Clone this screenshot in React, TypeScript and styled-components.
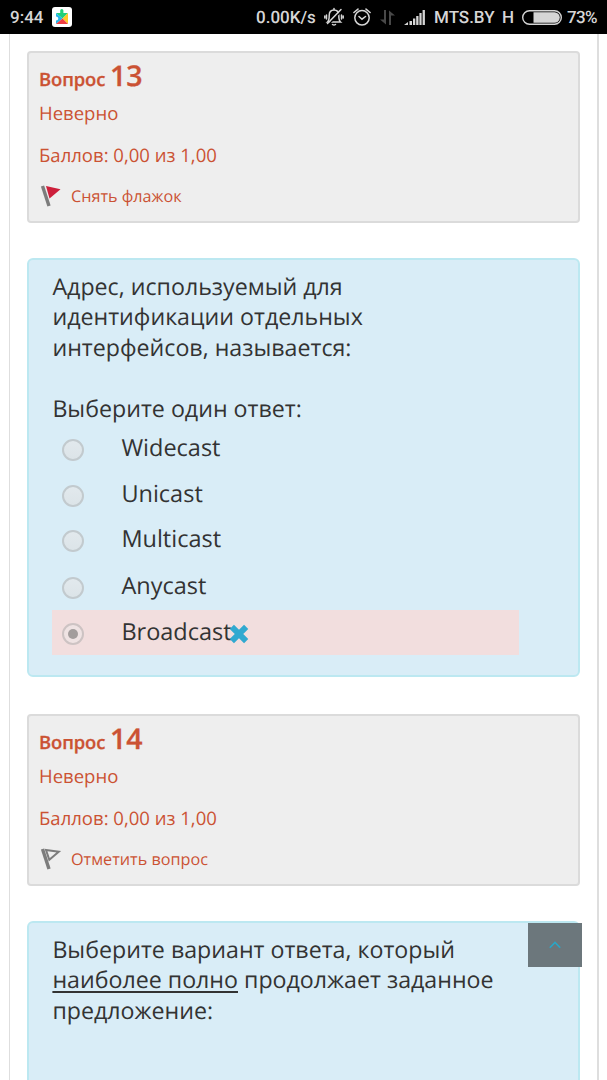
import React from "react";
import styled, { createGlobalStyle } from "styled-components";

const GlobalStyle = createGlobalStyle`
  *, *::before, *::after { box-sizing: border-box; }
  html, body { margin: 0; background: #fff; }
  body {
    height: 1080px;
    overflow: hidden;
    font-family: "Open Sans", sans-serif;
    text-rendering: geometricPrecision;
  }
  p { margin: 0; }
`;

const Screen = styled.div`
  position: relative;
  width: 607px;
  height: 1080px;
  overflow: hidden;
  background: #fff;
`;

const StatusBar = styled.header`
  display: flex;
  align-items: center;
  height: 34px;
  padding: 0 10px;
  background: #000;
  color: #d6d6d6;
  font: 500 17px/34px Roboto, sans-serif;
  white-space: nowrap;
  svg { display: block; flex: none; }
`;

const Clock = styled.span`
  width: 42px;
  padding-top: 1px;
`;

const StatusRight = styled.div`
  display: flex;
  align-items: center;
  width: 341px;
  margin-left: auto;
`;

const StatusText = styled.span<{ $w: number; $spacing?: number }>`
  flex: none;
  width: ${(p) => p.$w}px;
  padding-top: 1px;
  letter-spacing: ${(p) => p.$spacing ?? 0}px;
`;

const Gap = styled.i<{ $w: number }>`
  flex: none;
  width: ${(p) => p.$w}px;
`;

const Page = styled.main`
  width: 590px;
  height: 1046px;
  margin-left: 9px;
  padding: 17px 17px 0;
  border: solid #dedede;
  border-width: 0 2px 0 1px;
`;

const InfoCard = styled.section`
  height: 172px;
  padding: 9px 10px;
  border: 2px solid #dbdbdb;
  border-radius: 4px;
  background: #eee;
  color: #cb5233;
  width: 553px;
  margin-bottom: 35px;
`;

const Title = styled.h3`
  margin: 0;
  height: 36px;
  font-size: 18.4px;
  line-height: 28px;
  font-weight: 600;
  letter-spacing: -0.1px;
  -webkit-text-stroke: 0.3px currentColor;
`;

const Number = styled.span`
  font-size: 28.5px;
  letter-spacing: 0;
`;

const Meta = styled.p<{ $h: number }>`
  height: ${(p) => p.$h}px;
  font-size: 18.55px;
  line-height: 31px;
`;

const FlagRow = styled.div`
  display: flex;
  align-items: center;
  height: 28px;
  font-size: 16.2px;
  svg { margin: 0 9px 0 1px; }
`;

const Question = styled.section<{ $h: number }>`
  width: 553px;
  height: ${(p) => p.$h}px;
  padding: 11px 23.4px;
  border: 2px solid #bce8f1;
  border-radius: 6px;
  background: #d9edf7;
  color: #333;
  font-size: 23.2px;
  line-height: 30.4px;
  margin-bottom: 37px;
`;

const Prompt = styled.div`
  margin-top: 30.4px;
`;

const Underlined = styled.span`
  text-decoration: underline;
  text-decoration-thickness: 1.5px;
  text-underline-offset: 2.5px;
  text-decoration-skip-ink: none;
`;

const Answers = styled.div`
  width: 467px;
  padding-top: 3.2px;
  font-size: 23.5px;
`;

const Answer = styled.label<{ $wrong?: boolean; $h: number }>`
  display: flex;
  align-items: flex-start;
  height: ${(p) => p.$h}px;
  padding-left: 10px;
  background: ${(p) => (p.$wrong ? "#f2dede" : "transparent")};
  > svg { margin: 13px 0 0 -4px; }
`;

const Radio = styled.span<{ $checked?: boolean }>`
  display: grid;
  place-items: center;
  width: 22px;
  height: 22px;
  margin: 13px 37px 0 0;
  border: 2px solid ${(p) => (p.$checked ? "#cdc3c3" : "#c2cace")};
  border-radius: 50%;
  background: ${(p) => (p.$checked ? "#efe3e3" : "linear-gradient(#e2e9ed, #dce4e8)")};
  &::after {
    content: "";
    width: 10px;
    height: 10px;
    border-radius: 50%;
    background: ${(p) => (p.$checked ? "#a39d9c" : "transparent")};
  }
`;

const AnswerText = styled.span`
  margin-top: 6px;
`;

const TopButton = styled.button`
  position: absolute;
  left: 528px;
  top: 923px;
  display: grid;
  place-items: center;
  width: 54px;
  height: 44px;
  padding: 0;
  border: 0;
  background: #6c777c;
`;

const PuzzleIcon = () => (
  <svg width="20" height="20" viewBox="0 0 20 20">
    <rect width="20" height="20" rx="3" fill="#fff" />
    <path d="M4 6h4.200V3.500a1.600 1.600 0 0 1 3.200 0V6H16l-5.500 5.500z" fill="#22d07a" />
    <path d="M4 6l6.500 5.500L4 17v-3.500c3 0 3-4 0-4z" fill="#25b5ea" />
    <path d="M16 6v11l-5.500-5.500z" fill="#ffc928" />
    <path d="M4 17l6.500-5.500L16 17z" fill="#ef3e42" />
  </svg>
);

const MuteIcon = () => (
  <svg width="20" height="20" viewBox="0 0 20 20" fill="none" stroke="#d6d6d6" strokeWidth="1.500" strokeLinecap="round">
    <path d="M3.500 15h13c-1.700-1.500-1.700-3.500-1.700-6.500C14.800 5 13 3 10 3S5.200 5 5.200 8.500c0 3 0 5-1.700 6.500zM8.500 17.500q1.500 1 3 0M10 1.500V3M2.500 8v4M17.500 8v4M.8 9v2M19.200 9v2" />
    <path d="M4.500 17.500 18 3.500" stroke="#000" strokeWidth="1.500" />
    <path d="M3.500 16.500 17 2.500" />
  </svg>
);

const AlarmIcon = () => (
  <svg width="18" height="18" viewBox="0 0 18 18" fill="none" stroke="#d6d6d6" strokeWidth="1.500" strokeLinecap="round">
    <circle cx="9" cy="9.800" r="7.200" />
    <path d="M.9 4.500 5 1.100M17.100 4.500 13 1.100M6 8.500l3 2.700 3.500-2.700" />
  </svg>
);

const DataIcon = () => (
  <svg width="15" height="15" viewBox="0 0 15 15" fill="#484848">
    <path d="M4 0h2v14.500L0 9.500h4zM9 15h2V5.500h4L9 .500z" />
  </svg>
);

const SignalIcon = () => (
  <svg width="21" height="15" viewBox="0 0 21 15" fill="#d6d6d6">
    <path d="M0 15l4-3v3zM5.500 11H8v4H5.500zM9 8.500h2.300V15H9zM12.200 6h2.300v9h-2.300zM15.400 3h2.200v12h-2.200zM18.600 0h2.300v15h-2.300z" />
  </svg>
);

const BatteryIcon = () => (
  <svg width="40" height="15" viewBox="0 0 40 15">
    <rect x=".7" y=".7" width="38.600" height="13.600" rx="6.800" fill="none" stroke="#d6d6d6" strokeWidth="1.400" />
    <path d="M11.500 2.200H32.500a5.300 5.300 0 0 1 0 10.600H11.500z" fill="#d6d6d6" />
  </svg>
);

const FlagIcon = ({ on }: { on?: boolean }) => (
  <svg width="22" height="22" viewBox="0 0 22 22">
    <path d="M2.500 1 9 21" stroke="#7c7c7c" strokeWidth="3.400" />
    {on ? (
      <path d="M6 1 20.500 4.200 9.500 13.500z" fill="#cd1f3b" />
    ) : (
      <path d="M6 2 18.800 3.700 9.300 11.800z" fill="#eee" stroke="#7c7c7c" strokeWidth="2" />
    )}
  </svg>
);

const WrongIcon = () => (
  <svg width="22" height="22" viewBox="0 0 20 20">
    <path d="M3.500 3.500l13 13M16.500 3.500l-13 13" stroke="#31a9d0" strokeWidth="5.400" />
  </svg>
);

const answers = [
  { text: "Widecast", h: 46 },
  { text: "Unicast", h: 45 },
  { text: "Multicast", h: 47 },
  { text: "Anycast", h: 46 },
  { text: "Broadcast", h: 45, wrong: true },
];

function QuestionInfo({ n, flagged, flagText }: { n: number; flagged?: boolean; flagText: string }) {
  return (
    <InfoCard>
      <Title>
        Вопрос <Number>{n}</Number>
      </Title>
      <Meta $h={42}>Неверно</Meta>
      <Meta $h={42}>Баллов: 0,00 из 1,00</Meta>
      <FlagRow>
        <FlagIcon on={flagged} />
        {flagText}
      </FlagRow>
    </InfoCard>
  );
}

export default function App() {
  return (
    <Screen>
      <GlobalStyle />
      <StatusBar>
        <Clock>9:44</Clock>
        <PuzzleIcon />
        <StatusRight>
          <StatusText $w={68}>0.00K/s</StatusText>
          <MuteIcon />
          <Gap $w={9} />
          <AlarmIcon />
          <Gap $w={9} />
          <DataIcon />
          <Gap $w={9} />
          <SignalIcon />
          <Gap $w={9} />
          <StatusText $w={68}>MTS.BY</StatusText>
          <StatusText $w={20}>H</StatusText>
          <BatteryIcon />
          <Gap $w={5} />
          <StatusText $w={30} $spacing={-0.6}>73%</StatusText>
        </StatusRight>
      </StatusBar>
      <Page>
        <QuestionInfo n={13} flagged flagText="Снять флажок" />
        <Question $h={419}>
          <p>
            Адрес, используемый для
            <br />
            идентификации отдельных
            <br />
            интерфейсов, называется:
          </p>
          <Prompt>Выберите один ответ:</Prompt>
          <Answers>
            {answers.map((a) => (
              <Answer key={a.text} $wrong={a.wrong} $h={a.h}>
                <Radio $checked={a.wrong} />
                <AnswerText>{a.text}</AnswerText>
                {a.wrong && <WrongIcon />}
              </Answer>
            ))}
          </Answers>
        </Question>
        <QuestionInfo n={14} flagText="Отметить вопрос" />
        <Question $h={200}>
          <p>
            Выберите вариант ответа, который
            <br />
            <Underlined>наиболее полно</Underlined> продолжает заданное
            <br />
            предложение:
          </p>
        </Question>
      </Page>
      <TopButton aria-label="Наверх">
        <svg width="12" height="8" viewBox="0 0 12 8" fill="none" stroke="#2ba6c6" strokeWidth="1.600">
          <path d="M.8 6.800 6 1.500l5.200 5.300" />
        </svg>
      </TopButton>
    </Screen>
  );
}
